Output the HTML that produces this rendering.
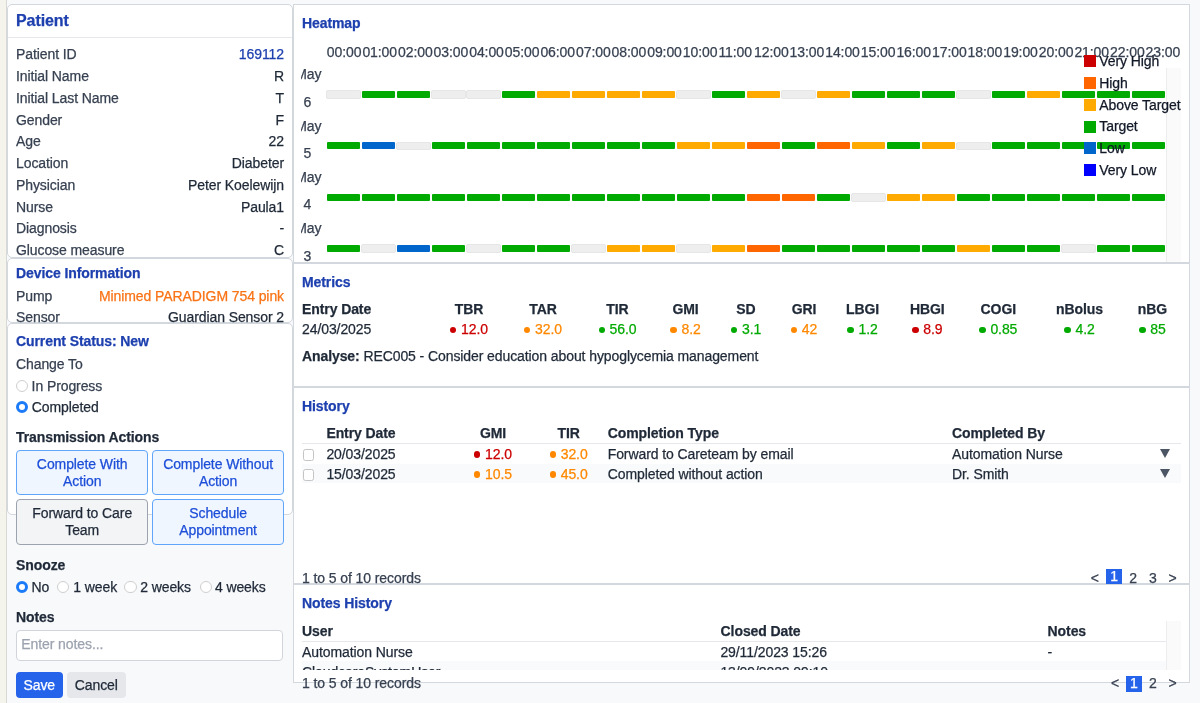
<!DOCTYPE html>
<html><head><meta charset="utf-8"><title>Patient</title>
<style>
*{box-sizing:border-box;margin:0;padding:0}
html,body{width:1200px;height:703px;overflow:hidden}
body{background:#f5f4ec;font-family:"Liberation Sans",Arial,Helvetica,sans-serif;font-size:14px;line-height:16px;letter-spacing:-0.09px;color:#374151;position:relative}
#root{position:absolute;left:0;top:0;width:1200px;height:703px;will-change:transform;-webkit-text-stroke:0.25px}
#wrap{position:absolute;left:6px;top:0;width:1194px;height:703px;background:#f8f9fb;border-left:1px solid #d8d8d4}
.panel{position:absolute;background:#fff;border:1px solid #d3d7de}
.lp{border-radius:5px}
.t{position:absolute;white-space:nowrap}
.h{font-weight:bold;color:#1e40af}
.h2{color:#1e40af}
.hb{font-weight:bold;color:#1f2937}
.dk{color:#1f2937}
.lgt{color:#111827}
.r{color:#cc0000}.o{color:#ff8800}.g{color:#00aa00}
.mc{position:absolute;width:100px;text-align:center;white-space:nowrap}
.mc .d{display:inline-block;width:6.4px;height:6.4px;border-radius:50%;background:currentColor;margin-right:4.7px;vertical-align:1.1px}
#hm{position:absolute;left:301px;top:68px;width:880px;height:194px;overflow:hidden}
#hm .b{position:absolute;width:33.5px;height:7px;border-radius:1px}
#hm .b.e{margin:-0.8px 0 0 -0.5px;width:34.7px;height:8.6px;border:1px solid #e6e6e6;border-radius:2px}
#hm .dl{position:absolute;white-space:nowrap}
.sb{position:absolute;right:0;top:0;width:15px;height:100%;background:#fafafa;border-left:1px solid #ededed}
.lq{position:absolute;left:1084.3px;width:12px;height:12px}
.btn{position:absolute;border:1px solid #60a5fa;background:#eff6ff;color:#1d4ed8;border-radius:4px;text-align:center;line-height:17.6px;padding-top:4.4px}
.btn.gr{border-color:#9ca3af;background:#f3f4f6;color:#1f2937}
.rad{position:absolute;width:12.2px;height:12.2px;border-radius:50%;border:1.2px solid #cfcfcf;background:#fff}
.rad.on{border:3.9px solid #1b7bf9}
.cb{position:absolute;width:11.5px;height:11.5px;border:1px solid #c4c4c4;border-radius:2.5px;background:#fff}
.pgc{position:absolute;width:15.7px;height:15.2px;background:#2563eb;color:#fff;text-align:center;line-height:15.4px}
.tri{position:absolute;left:1160.2px;width:0;height:0;border-left:5.25px solid transparent;border-right:5.25px solid transparent;border-top:9.6px solid #4b5563}
.ln{position:absolute;height:1px;background:#e5e7eb}
</style></head><body>
<div id="root">
<div id="wrap"></div>

<!-- left column -->
<div class="panel lp" style="left:7px;top:4px;width:285.5px;height:254px"></div>
<div class="t h" style="left:16px;top:11.65px;font-size:16px;line-height:18px">Patient</div>
<div class="ln" style="left:8px;top:36.5px;width:284px"></div>
<div class="t " style="left:16px;top:46.35px;">Patient ID</div><div class="t h2" style="right:916px;top:46.35px;">169112</div><div class="t " style="left:16px;top:68.10px;">Initial Name</div><div class="t dk" style="right:916px;top:68.10px;">R</div><div class="t " style="left:16px;top:89.85px;">Initial Last Name</div><div class="t dk" style="right:916px;top:89.85px;">T</div><div class="t " style="left:16px;top:111.60px;">Gender</div><div class="t dk" style="right:916px;top:111.60px;">F</div><div class="t " style="left:16px;top:133.35px;">Age</div><div class="t dk" style="right:916px;top:133.35px;">22</div><div class="t " style="left:16px;top:155.10px;">Location</div><div class="t dk" style="right:916px;top:155.10px;">Diabeter</div><div class="t " style="left:16px;top:176.85px;">Physician</div><div class="t dk" style="right:916px;top:176.85px;">Peter Koelewijn</div><div class="t " style="left:16px;top:198.60px;">Nurse</div><div class="t dk" style="right:916px;top:198.60px;">Paula1</div><div class="t " style="left:16px;top:220.35px;">Diagnosis</div><div class="t dk" style="right:916px;top:220.35px;">-</div><div class="t " style="left:16px;top:242.10px;">Glucose measure</div><div class="t dk" style="right:916px;top:242.10px;">C</div>
<div class="panel lp" style="left:7px;top:258px;width:285.5px;height:65px"></div>
<div class="t h" style="left:16px;top:265.15px;">Device Information</div>
<div class="t " style="left:16px;top:287.55px;">Pump</div><div class="t " style="right:916px;top:287.55px;color:#f97316">Minimed PARADIGM 754 pink</div>
<div style="position:absolute;left:8px;top:305px;width:284px;height:18px;overflow:hidden">
<div class="t " style="left:8px;top:4.35px;">Sensor</div><div class="t dk" style="right:8px;top:4.35px;">Guardian Sensor 2</div>
</div>
<div class="panel lp" style="left:7px;top:323px;width:285.5px;height:192px"></div>
<div class="t h" style="left:16px;top:333.25px;">Current Status: New</div>
<div class="t " style="left:16px;top:356.25px;">Change To</div>
<i class="rad" style="left:15.9px;top:379.8px"></i><div class="t " style="left:31.6px;top:377.65px;">In Progress</div>
<i class="rad on" style="left:15.9px;top:401.3px"></i><div class="t dk" style="left:31.7px;top:399.35px;">Completed</div>
<div class="t hb" style="left:16px;top:429.25px;">Transmission Actions</div>
<div class="btn" style="left:16.2px;top:450.2px;width:132px;height:44.8px">Complete With<br>Action</div>
<div class="btn" style="left:152.4px;top:450.2px;width:131.4px;height:44.8px">Complete Without<br>Action</div>
<div class="btn gr" style="left:16.2px;top:499.3px;width:132px;height:45.4px">Forward to Care<br>Team</div>
<div class="btn" style="left:152.4px;top:499.3px;width:131.4px;height:45.4px">Schedule<br>Appointment</div>
<div class="t hb" style="left:16px;top:556.95px;">Snooze</div>
<i class="rad on" style="left:15.8px;top:581.2px"></i><div class="t dk" style="left:31.6px;top:579.15px;">No</div>
<i class="rad" style="left:57px;top:581.2px"></i><div class="t dk" style="left:73.3px;top:579.15px;">1 week</div>
<i class="rad" style="left:124.4px;top:581.2px"></i><div class="t dk" style="left:140.2px;top:579.15px;">2 weeks</div>
<i class="rad" style="left:199.5px;top:581.2px"></i><div class="t dk" style="left:214.9px;top:579.15px;">4 weeks</div>
<div class="t hb" style="left:16px;top:608.55px;">Notes</div>
<div style="position:absolute;left:16.1px;top:630.2px;width:267.2px;height:31px;border:1px solid #d1d5db;border-radius:4px;background:#fff"></div>
<div class="t " style="left:21.3px;top:635.55px;color:#9ca3af">Enter notes...</div>
<div style="position:absolute;left:15.8px;top:672.4px;width:47.2px;height:25.7px;border-radius:4px;background:#2563eb"></div>
<div class="t " style="left:23.5px;top:676.95px;color:#fff">Save</div>
<div style="position:absolute;left:67.1px;top:672.4px;width:59.1px;height:25.7px;border-radius:4px;background:#e5e7eb"></div>
<div class="t dk" style="left:74.8px;top:676.95px;">Cancel</div>

<!-- right column -->
<div class="panel" style="left:292.5px;top:4px;width:897.5px;height:259px"></div>
<div class="t h" style="left:302px;top:15.15px;">Heatmap</div>
<div class="t " style="left:326.8px;top:44.25px;">00:00</div><div class="t " style="left:362.4px;top:44.25px;">01:00</div><div class="t " style="left:398.0px;top:44.25px;">02:00</div><div class="t " style="left:433.6px;top:44.25px;">03:00</div><div class="t " style="left:469.2px;top:44.25px;">04:00</div><div class="t " style="left:504.8px;top:44.25px;">05:00</div><div class="t " style="left:540.4px;top:44.25px;">06:00</div><div class="t " style="left:576.0px;top:44.25px;">07:00</div><div class="t " style="left:611.6px;top:44.25px;">08:00</div><div class="t " style="left:647.2px;top:44.25px;">09:00</div><div class="t " style="left:682.8px;top:44.25px;">10:00</div><div class="t " style="left:718.4px;top:44.25px;">11:00</div><div class="t " style="left:754.0px;top:44.25px;">12:00</div><div class="t " style="left:789.6px;top:44.25px;">13:00</div><div class="t " style="left:825.2px;top:44.25px;">14:00</div><div class="t " style="left:860.8px;top:44.25px;">15:00</div><div class="t " style="left:896.4px;top:44.25px;">16:00</div><div class="t " style="left:932.0px;top:44.25px;">17:00</div><div class="t " style="left:967.6px;top:44.25px;">18:00</div><div class="t " style="left:1003.2px;top:44.25px;">19:00</div><div class="t " style="left:1038.8px;top:44.25px;">20:00</div><div class="t " style="left:1074.4px;top:44.25px;">21:00</div><div class="t " style="left:1110.0px;top:44.25px;">22:00</div><div class="t " style="left:1145.6px;top:44.25px;">23:00</div>
<div id="hm">
<i class="b e" style="left:25.70px;top:23.10px;background:#eeeeee"></i>
<i class="b" style="left:60.70px;top:23.10px;background:#00aa00"></i>
<i class="b" style="left:95.70px;top:23.10px;background:#00aa00"></i>
<i class="b e" style="left:130.70px;top:23.10px;background:#eeeeee"></i>
<i class="b e" style="left:165.70px;top:23.10px;background:#eeeeee"></i>
<i class="b" style="left:200.70px;top:23.10px;background:#00aa00"></i>
<i class="b" style="left:235.70px;top:23.10px;background:#ffaa00"></i>
<i class="b" style="left:270.70px;top:23.10px;background:#ffaa00"></i>
<i class="b" style="left:305.70px;top:23.10px;background:#ffaa00"></i>
<i class="b" style="left:340.70px;top:23.10px;background:#ffaa00"></i>
<i class="b e" style="left:375.70px;top:23.10px;background:#eeeeee"></i>
<i class="b" style="left:410.70px;top:23.10px;background:#00aa00"></i>
<i class="b" style="left:445.70px;top:23.10px;background:#ffaa00"></i>
<i class="b e" style="left:480.70px;top:23.10px;background:#eeeeee"></i>
<i class="b" style="left:515.70px;top:23.10px;background:#ffaa00"></i>
<i class="b" style="left:550.70px;top:23.10px;background:#00aa00"></i>
<i class="b" style="left:585.70px;top:23.10px;background:#00aa00"></i>
<i class="b" style="left:620.70px;top:23.10px;background:#00aa00"></i>
<i class="b e" style="left:655.70px;top:23.10px;background:#eeeeee"></i>
<i class="b" style="left:690.70px;top:23.10px;background:#00aa00"></i>
<i class="b" style="left:725.70px;top:23.10px;background:#ffaa00"></i>
<i class="b" style="left:760.70px;top:23.10px;background:#00aa00"></i>
<i class="b" style="left:795.70px;top:23.10px;background:#00aa00"></i>
<i class="b" style="left:830.70px;top:23.10px;background:#00aa00"></i>
<span class="dl" style="top:-1.85px;left:-5.80px">May</span>
<span class="dl" style="top:25.55px;left:2.40px">6</span>
<i class="b" style="left:25.70px;top:74.47px;background:#00aa00"></i>
<i class="b" style="left:60.70px;top:74.47px;background:#0066cc"></i>
<i class="b e" style="left:95.70px;top:74.47px;background:#eeeeee"></i>
<i class="b" style="left:130.70px;top:74.47px;background:#00aa00"></i>
<i class="b" style="left:165.70px;top:74.47px;background:#00aa00"></i>
<i class="b" style="left:200.70px;top:74.47px;background:#00aa00"></i>
<i class="b" style="left:235.70px;top:74.47px;background:#00aa00"></i>
<i class="b" style="left:270.70px;top:74.47px;background:#00aa00"></i>
<i class="b" style="left:305.70px;top:74.47px;background:#00aa00"></i>
<i class="b" style="left:340.70px;top:74.47px;background:#00aa00"></i>
<i class="b" style="left:375.70px;top:74.47px;background:#ffaa00"></i>
<i class="b" style="left:410.70px;top:74.47px;background:#ffaa00"></i>
<i class="b" style="left:445.70px;top:74.47px;background:#ff6600"></i>
<i class="b" style="left:480.70px;top:74.47px;background:#00aa00"></i>
<i class="b" style="left:515.70px;top:74.47px;background:#ff6600"></i>
<i class="b" style="left:550.70px;top:74.47px;background:#ffaa00"></i>
<i class="b" style="left:585.70px;top:74.47px;background:#00aa00"></i>
<i class="b" style="left:620.70px;top:74.47px;background:#ffaa00"></i>
<i class="b e" style="left:655.70px;top:74.47px;background:#eeeeee"></i>
<i class="b" style="left:690.70px;top:74.47px;background:#00aa00"></i>
<i class="b" style="left:725.70px;top:74.47px;background:#00aa00"></i>
<i class="b" style="left:760.70px;top:74.47px;background:#00aa00"></i>
<i class="b" style="left:795.70px;top:74.47px;background:#00aa00"></i>
<i class="b" style="left:830.70px;top:74.47px;background:#00aa00"></i>
<span class="dl" style="top:49.52px;left:-5.80px">May</span>
<span class="dl" style="top:76.92px;left:2.40px">5</span>
<i class="b" style="left:25.70px;top:125.84px;background:#00aa00"></i>
<i class="b" style="left:60.70px;top:125.84px;background:#00aa00"></i>
<i class="b" style="left:95.70px;top:125.84px;background:#00aa00"></i>
<i class="b" style="left:130.70px;top:125.84px;background:#00aa00"></i>
<i class="b" style="left:165.70px;top:125.84px;background:#00aa00"></i>
<i class="b" style="left:200.70px;top:125.84px;background:#00aa00"></i>
<i class="b" style="left:235.70px;top:125.84px;background:#00aa00"></i>
<i class="b" style="left:270.70px;top:125.84px;background:#00aa00"></i>
<i class="b" style="left:305.70px;top:125.84px;background:#00aa00"></i>
<i class="b" style="left:340.70px;top:125.84px;background:#00aa00"></i>
<i class="b" style="left:375.70px;top:125.84px;background:#00aa00"></i>
<i class="b" style="left:410.70px;top:125.84px;background:#00aa00"></i>
<i class="b" style="left:445.70px;top:125.84px;background:#ff6600"></i>
<i class="b" style="left:480.70px;top:125.84px;background:#ff6600"></i>
<i class="b" style="left:515.70px;top:125.84px;background:#00aa00"></i>
<i class="b e" style="left:550.70px;top:125.84px;background:#eeeeee"></i>
<i class="b" style="left:585.70px;top:125.84px;background:#ffaa00"></i>
<i class="b" style="left:620.70px;top:125.84px;background:#ffaa00"></i>
<i class="b" style="left:655.70px;top:125.84px;background:#00aa00"></i>
<i class="b" style="left:690.70px;top:125.84px;background:#00aa00"></i>
<i class="b" style="left:725.70px;top:125.84px;background:#00aa00"></i>
<i class="b" style="left:760.70px;top:125.84px;background:#00aa00"></i>
<i class="b" style="left:795.70px;top:125.84px;background:#00aa00"></i>
<i class="b" style="left:830.70px;top:125.84px;background:#00aa00"></i>
<span class="dl" style="top:100.89px;left:-5.80px">May</span>
<span class="dl" style="top:128.29px;left:2.40px">4</span>
<i class="b" style="left:25.70px;top:177.21px;background:#00aa00"></i>
<i class="b e" style="left:60.70px;top:177.21px;background:#eeeeee"></i>
<i class="b" style="left:95.70px;top:177.21px;background:#0066cc"></i>
<i class="b" style="left:130.70px;top:177.21px;background:#00aa00"></i>
<i class="b e" style="left:165.70px;top:177.21px;background:#eeeeee"></i>
<i class="b" style="left:200.70px;top:177.21px;background:#00aa00"></i>
<i class="b" style="left:235.70px;top:177.21px;background:#00aa00"></i>
<i class="b e" style="left:270.70px;top:177.21px;background:#eeeeee"></i>
<i class="b" style="left:305.70px;top:177.21px;background:#ffaa00"></i>
<i class="b" style="left:340.70px;top:177.21px;background:#ffaa00"></i>
<i class="b e" style="left:375.70px;top:177.21px;background:#eeeeee"></i>
<i class="b" style="left:410.70px;top:177.21px;background:#ffaa00"></i>
<i class="b" style="left:445.70px;top:177.21px;background:#ff6600"></i>
<i class="b" style="left:480.70px;top:177.21px;background:#00aa00"></i>
<i class="b" style="left:515.70px;top:177.21px;background:#00aa00"></i>
<i class="b" style="left:550.70px;top:177.21px;background:#00aa00"></i>
<i class="b" style="left:585.70px;top:177.21px;background:#00aa00"></i>
<i class="b" style="left:620.70px;top:177.21px;background:#00aa00"></i>
<i class="b" style="left:655.70px;top:177.21px;background:#ffaa00"></i>
<i class="b" style="left:690.70px;top:177.21px;background:#00aa00"></i>
<i class="b" style="left:725.70px;top:177.21px;background:#00aa00"></i>
<i class="b e" style="left:760.70px;top:177.21px;background:#eeeeee"></i>
<i class="b" style="left:795.70px;top:177.21px;background:#00aa00"></i>
<i class="b" style="left:830.70px;top:177.21px;background:#00aa00"></i>
<span class="dl" style="top:152.26px;left:-5.80px">May</span>
<span class="dl" style="top:179.66px;left:2.40px">3</span>
<div class="sb"></div>
</div>
<i class="lq" style="top:55.40px;background:#cc0000"></i><div class="t lgt" style="left:1099.3px;top:53.15px;">Very High</div><i class="lq" style="top:77.16px;background:#ff6600"></i><div class="t lgt" style="left:1099.3px;top:74.91px;">High</div><i class="lq" style="top:98.92px;background:#ffaa00"></i><div class="t lgt" style="left:1099.3px;top:96.67px;">Above Target</div><i class="lq" style="top:120.68px;background:#00aa00"></i><div class="t lgt" style="left:1099.3px;top:118.43px;">Target</div><i class="lq" style="top:142.44px;background:#0066cc"></i><div class="t lgt" style="left:1099.3px;top:140.19px;">Low</div><i class="lq" style="top:164.20px;background:#0000ff"></i><div class="t lgt" style="left:1099.3px;top:161.95px;">Very Low</div>

<div class="panel" style="left:292.5px;top:263px;width:897.5px;height:124px"></div>
<div class="t h" style="left:302px;top:274.15px;">Metrics</div>
<div class="t hb" style="left:302px;top:301.45px;">Entry Date</div>
<div class="t dk" style="left:302px;top:321.15px;">24/03/2025</div>
<div class="mc hb" style="left:419.00px;top:301.45px;">TBR</div><div class="mc r" style="left:419.00px;top:321.15px;"><i class="d"></i>12.0</div><div class="mc hb" style="left:493.00px;top:301.45px;">TAR</div><div class="mc o" style="left:493.00px;top:321.15px;"><i class="d"></i>32.0</div><div class="mc hb" style="left:567.50px;top:301.45px;">TIR</div><div class="mc g" style="left:567.50px;top:321.15px;"><i class="d"></i>56.0</div><div class="mc hb" style="left:635.50px;top:301.45px;">GMI</div><div class="mc o" style="left:635.50px;top:321.15px;"><i class="d"></i>8.2</div><div class="mc hb" style="left:696.00px;top:301.45px;">SD</div><div class="mc g" style="left:696.00px;top:321.15px;"><i class="d"></i>3.1</div><div class="mc hb" style="left:754.00px;top:301.45px;">GRI</div><div class="mc o" style="left:754.00px;top:321.15px;"><i class="d"></i>42</div><div class="mc hb" style="left:812.50px;top:301.45px;">LBGI</div><div class="mc g" style="left:812.50px;top:321.15px;"><i class="d"></i>1.2</div><div class="mc hb" style="left:877.30px;top:301.45px;">HBGI</div><div class="mc r" style="left:877.30px;top:321.15px;"><i class="d"></i>8.9</div><div class="mc hb" style="left:948.30px;top:301.45px;">COGI</div><div class="mc g" style="left:948.30px;top:321.15px;"><i class="d"></i>0.85</div><div class="mc hb" style="left:1029.50px;top:301.45px;">nBolus</div><div class="mc g" style="left:1029.50px;top:321.15px;"><i class="d"></i>4.2</div><div class="mc hb" style="left:1102.40px;top:301.45px;">nBG</div><div class="mc g" style="left:1102.40px;top:321.15px;"><i class="d"></i>85</div>
<div class="t dk" style="left:302px;top:348.15px;"><b>Analyse:</b> REC005 - Consider education about hypoglycemia management</div>

<div class="panel" style="left:292.5px;top:387px;width:897.5px;height:197px"></div>
<div class="t h" style="left:302px;top:397.55px;">History</div>
<div class="t hb" style="left:326.4px;top:424.95px;">Entry Date</div>
<div class="mc hb" style="left:443.00px;top:424.95px;">GMI</div>
<div class="mc hb" style="left:518.60px;top:424.95px;">TIR</div>
<div class="t hb" style="left:607.7px;top:424.95px;">Completion Type</div>
<div class="t hb" style="left:952px;top:424.95px;">Completed By</div>
<div class="ln" style="left:302px;top:443px;width:878.5px"></div>
<div style="position:absolute;left:302px;top:464px;width:878.5px;height:18.8px;background:#f9fafb"></div>
<i class="cb" style="left:302.6px;top:449.4px"></i><i class="cb" style="left:302.6px;top:469.2px"></i>
<div class="t dk" style="left:326.4px;top:445.95px;">20/03/2025</div>
<div class="mc r" style="left:443.00px;top:445.95px;"><i class="d"></i>12.0</div>
<div class="mc o" style="left:518.60px;top:445.95px;"><i class="d"></i>32.0</div>
<div class="t dk" style="left:607.7px;top:445.95px;">Forward to Careteam by email</div>
<div class="t dk" style="left:952px;top:445.95px;">Automation Nurse</div>
<i class="tri" style="top:449.1px"></i>
<div class="t dk" style="left:326.4px;top:465.65px;">15/03/2025</div>
<div class="mc o" style="left:443.00px;top:465.65px;"><i class="d"></i>10.5</div>
<div class="mc o" style="left:518.60px;top:465.65px;"><i class="d"></i>45.0</div>
<div class="t dk" style="left:607.7px;top:465.65px;">Completed without action</div>
<div class="t dk" style="left:952px;top:465.65px;">Dr. Smith</div>
<i class="tri" style="top:468.9px"></i>
<div style="position:absolute;left:300px;top:560px;width:500px;height:24.6px;overflow:hidden"><div class="t " style="left:2px;top:10.15px;">1 to 5 of 10 records</div></div>
<div class="t " style="left:1090.7px;top:570.15px;">&lt;</div>
<div class="pgc" style="left:1106.2px;top:569.4px">1</div>
<div class="t " style="left:1129.2px;top:570.15px;">2</div>
<div class="t " style="left:1149.1px;top:570.15px;">3</div>
<div class="t " style="left:1168.5px;top:570.15px;">&gt;</div>

<div class="panel" style="left:292.5px;top:584px;width:897.5px;height:98.5px"></div>
<div class="t h" style="left:302px;top:595.15px;">Notes History</div>
<div style="position:absolute;left:301px;top:621.4px;width:879.5px;height:48.6px;overflow:hidden">
 <div class="t hb" style="left:1px;top:1.25px;">User</div>
 <div class="t hb" style="left:419.6px;top:1.25px;">Closed Date</div>
 <div class="t hb" style="left:746.6px;top:1.25px;">Notes</div>
 <div class="ln" style="left:1px;top:19.6px;width:865px"></div>
 <div style="position:absolute;left:1px;top:40px;width:865px;height:19px;background:#f9fafb"></div>
 <div class="t dk" style="left:1px;top:22.35px;">Automation Nurse</div>
 <div class="t dk" style="left:419.4px;top:22.35px;">29/11/2023 15:26</div>
 <div class="t dk" style="left:746.4px;top:22.35px;">-</div>
 <div class="t dk" style="left:1px;top:42.35px;">CloudcareSystemUser</div>
 <div class="t dk" style="left:419.4px;top:42.35px;">13/09/2023 09:10</div>
 <div class="sb"></div>
</div>
<div class="t " style="left:302px;top:675.15px;">1 to 5 of 10 records</div>
<div class="t " style="left:1111px;top:675.15px;">&lt;</div>
<div class="pgc" style="left:1126px;top:675.8px;height:16px">1</div>
<div class="t " style="left:1149.1px;top:675.15px;">2</div>
<div class="t " style="left:1168.5px;top:675.15px;">&gt;</div>
</div>
</body></html>
